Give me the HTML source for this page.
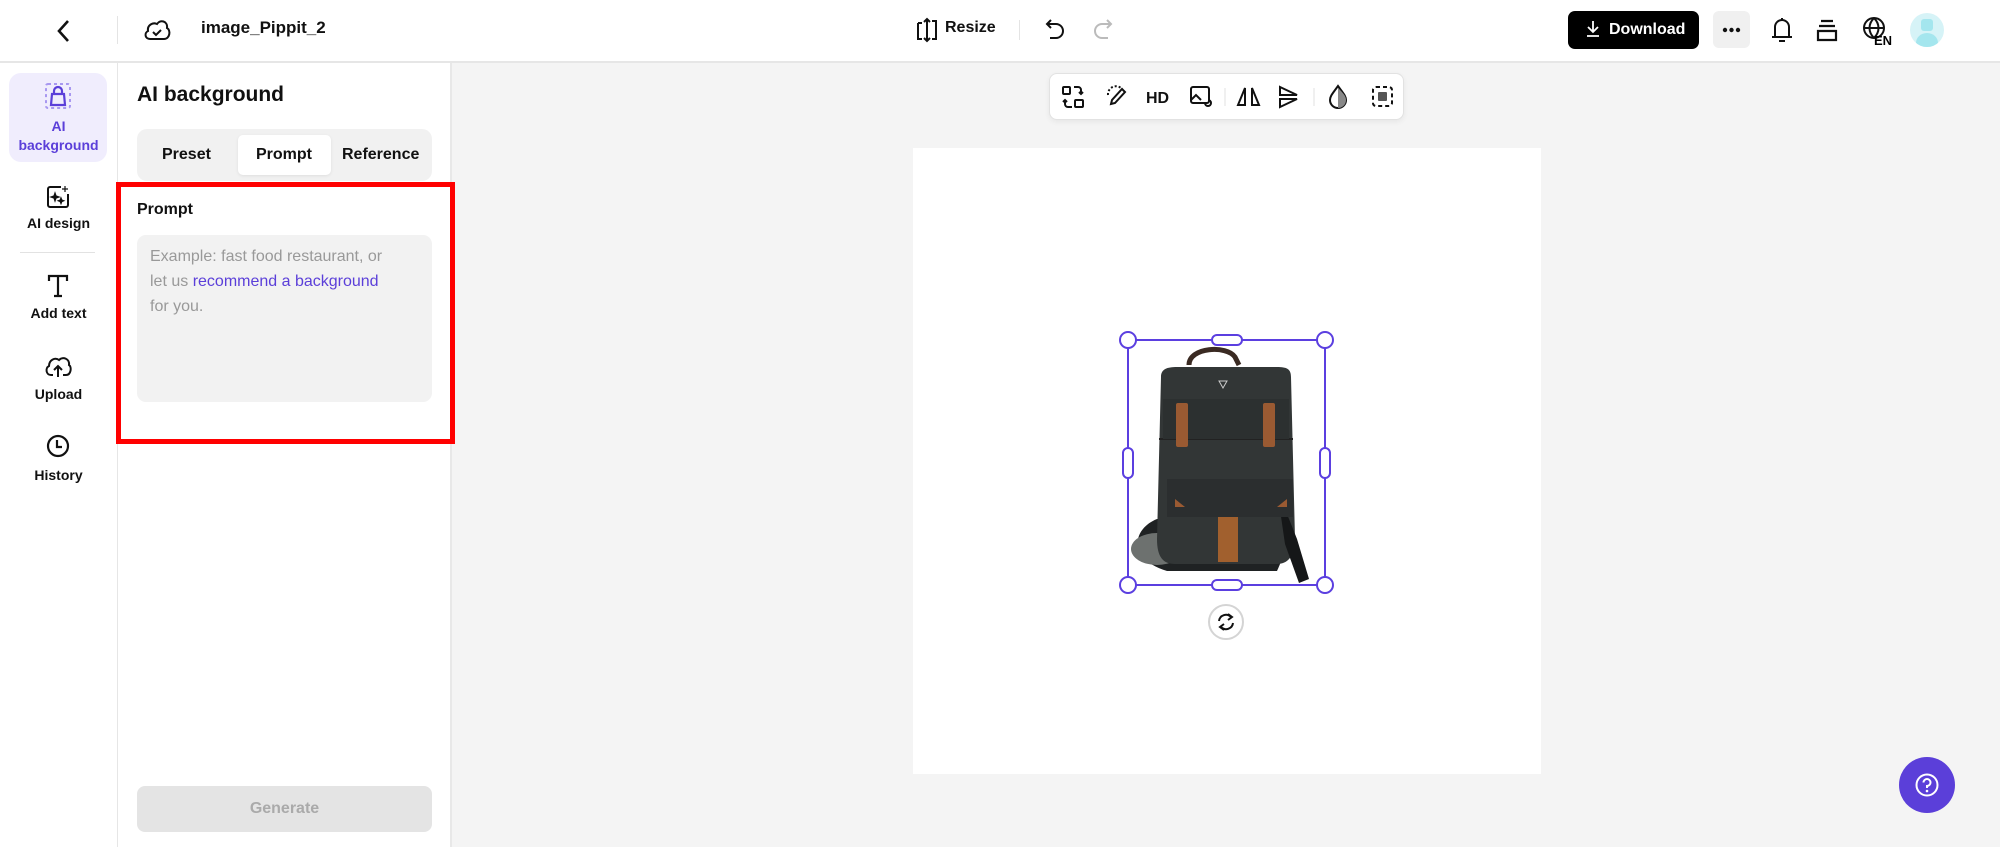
<!DOCTYPE html>
<html><head><meta charset="utf-8"><style>
*{box-sizing:border-box;margin:0;padding:0}
body{width:2000px;height:847px;overflow:hidden;background:#f4f4f4;font-family:"Liberation Sans",Arial,sans-serif;color:#111;position:relative}
.a{position:absolute}
.top{left:0;top:0;width:2000px;height:63px;background:#fff;border-bottom:2px solid #e6e6e6}
.rail{left:0;top:63px;width:117px;height:784px;background:#fff}
.panel{left:117px;top:63px;width:335px;height:784px;background:#fff;border-left:1px solid #e6e6e6;border-right:2px solid #e8e8e8}
.lab{width:117px;text-align:center;font-size:14px;font-weight:bold;left:0}
svg{overflow:visible}
</style></head><body>
<div class="a top"></div>
<svg class="a" style="left:56px;top:18px" width="16" height="26" viewBox="0 0 16 26"><path d="M12 3 L3 13 L12 23" fill="none" stroke="#111" stroke-width="2.6"/></svg>
<div class="a" style="left:117px;top:16px;width:1px;height:28px;background:#e4e4e4"></div>
<svg class="a" style="left:143px;top:17px" width="28" height="26" viewBox="0 0 28 26"><path d="M7 22 C2 22 1 16 5 14 C4 8 10 5 14 7 C17 2 25 4 24 11 C28 13 27 22 21 22 Z" fill="none" stroke="#111" stroke-width="2"/><path d="M10 15 L13 18 L18 13" fill="none" stroke="#111" stroke-width="2"/></svg>
<div class="a" style="left:201px;top:18px;font-size:17px;font-weight:bold;width:124px;overflow:hidden;white-space:nowrap">image_Pippit_2025</div>
<svg class="a" style="left:916px;top:17px" width="22" height="26" viewBox="0 0 22 26"><path d="M2 6 V22 H6 M2 6 H6 M16 4 H20 V22 H16" fill="none" stroke="#111" stroke-width="2"/><path d="M11 2 V24 M8 5 L11 2 L14 5 M8 21 L11 24 L14 21" fill="none" stroke="#111" stroke-width="2"/></svg>
<div class="a" style="left:945px;top:19px;font-size:16px;font-weight:bold">Resize</div>
<div class="a" style="left:1019px;top:20px;width:1px;height:20px;background:#e4e4e4"></div>
<svg class="a" style="left:1045px;top:18px" width="20" height="24" viewBox="0 0 20 24"><path d="M6 2 L2 6 L6 10 M2 6 H11 A6 6 0 0 1 11 20 H5" fill="none" stroke="#111" stroke-width="2"/></svg>
<svg class="a" style="left:1093px;top:18px" width="20" height="24" viewBox="0 0 20 24"><path d="M14 2 L18 6 L14 10 M18 6 H9 A6 6 0 0 0 9 20 H15" fill="none" stroke="#bbb" stroke-width="2"/></svg>
<div class="a" style="left:1568px;top:11px;width:131px;height:38px;background:#000;border-radius:7px;color:#fff;font-size:16px;font-weight:bold;line-height:38px;padding-left:41px">Download</div>
<svg class="a" style="left:1586px;top:20px" width="14" height="18" viewBox="0 0 14 18"><path d="M7 1 V12 M2 7 L7 12 L12 7 M1 16 H13" fill="none" stroke="#fff" stroke-width="1.8"/></svg>
<div class="a" style="left:1713px;top:11px;width:37px;height:37px;background:#f0f0f0;border-radius:6px"></div>
<svg class="a" style="left:1713px;top:11px" width="37" height="37" viewBox="0 0 37 37"><circle cx="12" cy="19" r="2.2" fill="#111"/><circle cx="18.5" cy="19" r="2.2" fill="#111"/><circle cx="25" cy="19" r="2.2" fill="#111"/></svg>
<svg class="a" style="left:1770px;top:15px" width="24" height="30" viewBox="0 0 24 30"><path d="M5 22 V12 A7 7 0 0 1 19 12 V22 H2 H22 M12 3 V5 M9 26 H15" fill="none" stroke="#111" stroke-width="2"/></svg>
<svg class="a" style="left:1815px;top:18px" width="24" height="26" viewBox="0 0 24 26"><path d="M6 3 H18 M4 8 H20 M3 13 H21 V22 H3 Z" fill="none" stroke="#111" stroke-width="2.2"/></svg>
<svg class="a" style="left:1862px;top:15px" width="36" height="32" viewBox="0 0 36 32"><circle cx="12" cy="13" r="10" fill="none" stroke="#111" stroke-width="2"/><path d="M2 13 H22 M12 3 C6 9 6 17 12 23 M12 3 C18 9 18 17 12 23" fill="none" stroke="#111" stroke-width="2"/><text x="12" y="30" font-size="13" font-weight="bold" font-family="Liberation Sans">EN</text></svg>
<div class="a" style="left:1910px;top:13px;width:34px;height:34px;border-radius:50%;background:#d6f3f7;overflow:hidden"><div class="a" style="left:6px;top:20px;width:22px;height:20px;border-radius:50%;background:#a4e6ee"></div><div class="a" style="left:11px;top:6px;width:12px;height:12px;border-radius:3px;background:#a4e6ee"></div></div>

<div class="a rail"></div>
<div class="a" style="left:9px;top:73px;width:98px;height:89px;background:#f0edfd;border-radius:12px"></div>
<svg class="a" style="left:45px;top:83px" width="26" height="26" viewBox="0 0 26 26"><rect x="1" y="1" width="24" height="24" rx="2" fill="none" stroke="#a898f0" stroke-width="2" stroke-dasharray="3 3"/><path d="M6 22 L7 11 H19 L20 22 Z M9 11 V8 A4 4 0 0 1 17 8 V11" fill="none" stroke="#5b3fd9" stroke-width="2.2"/></svg>
<div class="a lab" style="top:117px;color:#5b3fd9;line-height:19px;left:0">AI<br>background</div>
<svg class="a" style="left:46px;top:185px" width="24" height="24" viewBox="0 0 24 24"><path d="M15 2 H4 A2 2 0 0 0 2 4 V20 A2 2 0 0 0 4 22 H20 A2 2 0 0 0 22 20 V9" fill="none" stroke="#111" stroke-width="2"/><path d="M9 8 L10 11 L13 12 L10 13 L9 16 L8 13 L5 12 L8 11 Z M15 13 l.8 2 2 .8 -2 .8 -.8 2 -.8-2 -2-.8 2-.8Z M19 1 V7 M16 4 H22" fill="#111" stroke="#111" stroke-width="1.2"/></svg>
<div class="a lab" style="top:215px">AI design</div>
<div class="a" style="left:20px;top:252px;width:75px;height:1px;background:#e2e2e2"></div>
<svg class="a" style="left:47px;top:274px" width="22" height="24" viewBox="0 0 22 24"><path d="M2 7 V2 H20 V7 M11 2 V22 M7 22 H15" fill="none" stroke="#111" stroke-width="2.2"/></svg>
<div class="a lab" style="top:305px">Add text</div>
<svg class="a" style="left:44px;top:355px" width="28" height="24" viewBox="0 0 28 24"><path d="M9 20 H7 C2 20 1 13 5 11 C5 5 11 2 15 5 C19 1 26 4 25 10 C28 12 27 20 22 20 H19" fill="none" stroke="#111" stroke-width="2"/><path d="M14 22 V11 M10 15 L14 11 L18 15" fill="none" stroke="#111" stroke-width="2"/></svg>
<div class="a lab" style="top:386px">Upload</div>
<svg class="a" style="left:46px;top:434px" width="24" height="24" viewBox="0 0 24 24"><circle cx="12" cy="12" r="10" fill="none" stroke="#111" stroke-width="2.2"/><path d="M11 6 V13 H16" fill="none" stroke="#111" stroke-width="2.2"/></svg>
<div class="a lab" style="top:467px">History</div>

<div class="a panel"></div>
<div class="a" style="left:137px;top:83px;font-size:21px;font-weight:bold">AI background</div>
<div class="a" style="left:137px;top:129px;width:295px;height:52px;background:#f1f1f1;border-radius:10px"></div>
<div class="a" style="left:238px;top:135px;width:93px;height:40px;background:#fff;border-radius:5px;box-shadow:0 1px 3px rgba(0,0,0,.08)"></div>
<div class="a" style="left:162px;top:146px;font-size:16px;font-weight:bold">Preset</div>
<div class="a" style="left:256px;top:146px;font-size:16px;font-weight:bold">Prompt</div>
<div class="a" style="left:342px;top:146px;font-size:16px;font-weight:bold">Reference</div>
<div class="a" style="left:116px;top:182px;width:339px;height:262px;border:5px solid #ff0000"></div>
<div class="a" style="left:137px;top:201px;font-size:16px;font-weight:bold">Prompt</div>
<div class="a" style="left:137px;top:235px;width:295px;height:167px;background:#f2f2f2;border-radius:9px"></div>
<div class="a" style="left:150px;top:244px;width:280px;font-size:16px;line-height:25px;color:#999;white-space:nowrap">Example: fast food restaurant, or<br>let us <span style="color:#5b3fd9">recommend a background</span><br>for you.</div>
<div class="a" style="left:137px;top:786px;width:295px;height:46px;background:#e4e4e4;border-radius:8px;text-align:center;line-height:46px;font-size:16px;font-weight:bold;color:#aaa">Generate</div>

<div class="a" style="left:1049px;top:73px;width:355px;height:47px;background:#fff;border:1px solid #e2e2e2;border-radius:8px;box-shadow:0 2px 6px rgba(0,0,0,.06)"></div>
<svg class="a" style="left:1049px;top:73px" width="355" height="47" viewBox="1049 73 355 47">
<g fill="none" stroke="#111" stroke-width="2">
<rect x="1063" y="87" width="7" height="7" rx="1"/><rect x="1075" y="100" width="8" height="7" rx="1"/><path d="M1074 87 h4 a3 3 0 0 1 3 3 v4 M1079 92 l2 2 2-2 M1072 107 h-4 a3 3 0 0 1 -3-3 v-4 M1063 102 l2-2 2 2"/>
<path d="M1108 95 a8 8 0 0 1 14-6" stroke-dasharray="2 2"/><path d="M1122 89 l3 3 -10 11 -4 1 1-4 z"/>
<rect x="1191" y="87" width="18" height="16" rx="2"/><path d="M1191 100 l5-5 5 5 M1205 103 a3 3 0 1 0 3 -3"/>
<path d="M1245 88 v17 h-7 z M1252 88 v17 h7 z"/>
<path d="M1280 87 l17 8 -17 0 z M1280 107 l17-8 -17 0 z"/>
<path d="M1338 86 c-5 7 -8 10 -8 14 a8 8 0 0 0 16 0 c0-4 -3-7 -8-14z"/>
<rect x="1373" y="87" width="19" height="19" rx="3" stroke-dasharray="4 3"/>
</g>
<text x="1146" y="103" font-size="16" font-weight="bold" font-family="Liberation Sans" fill="#111">HD</text>
<path d="M1338 88 v20 a8 8 0 0 0 0 0 c4 0 8-3 8-8 c0-4-3-7-8-12z" fill="#888"/>
<rect x="1378" y="92" width="9" height="9" rx="1" fill="#555"/>
<path d="M1225 88 v18 M1314 88 v18" stroke="#e2e2e2" stroke-width="1"/>
</svg>

<div class="a" style="left:913px;top:148px;width:628px;height:626px;background:#fff"></div>
<svg class="a" style="left:1127px;top:339px" width="200" height="250" viewBox="0 0 200 250">
<path d="M62 26 C62 8 100 6 108 18 L112 26" fill="none" stroke="#3a2a22" stroke-width="5"/>
<path d="M30 180 C5 190 0 220 40 232 L150 232 C160 210 165 190 160 180 Z" fill="#1f2223"/>
<ellipse cx="30" cy="210" rx="26" ry="16" fill="#6d716f"/>
<path d="M34 38 C34 30 40 28 50 28 L150 28 C160 28 164 30 164 38 L168 200 C168 218 160 225 150 225 L48 225 C36 225 30 218 30 200 Z" fill="#323636"/>
<path d="M150 150 L170 200 L182 240 L172 244 L158 205 Z" fill="#151718"/>
<path d="M32 100 H166" stroke="#222" stroke-width="2"/>
<path d="M36 60 H162 V100 H36Z" fill="#2c3030"/>
<rect x="49" y="64" width="12" height="44" rx="2" fill="#9a5a32"/>
<rect x="136" y="64" width="12" height="44" rx="2" fill="#9a5a32"/>
<path d="M40 140 H166 V178 H40Z" fill="#2b2e2f"/>
<rect x="91" y="178" width="20" height="45" fill="#a1602e"/>
<path d="M48 160 l10 8 -10 0z M160 160 l-10 8 10 0z" fill="#9a5a32"/>
<path d="M92 42 l8 0 -4 7z" fill="none" stroke="#ccc" stroke-width="1"/>
</svg>
<svg class="a" style="left:1110px;top:322px" width="234" height="280" viewBox="1110 322 234 280">
<rect x="1128" y="340" width="197" height="245" fill="none" stroke="#5b3fe0" stroke-width="2"/>
<g fill="#fff" stroke="#5b3fe0" stroke-width="2">
<circle cx="1128" cy="340" r="8"/><circle cx="1325" cy="340" r="8"/><circle cx="1128" cy="585" r="8"/><circle cx="1325" cy="585" r="8"/>
<rect x="1212" y="335" width="30" height="10" rx="5"/><rect x="1212" y="580" width="30" height="10" rx="5"/>
<rect x="1123" y="448" width="10" height="30" rx="5"/><rect x="1320" y="448" width="10" height="30" rx="5"/>
</g></svg>
<div class="a" style="left:1208px;top:604px;width:36px;height:36px;border-radius:50%;background:#fff;border:2px solid #d4d4d4"></div>
<svg class="a" style="left:1216px;top:612px" width="20" height="20" viewBox="0 0 20 20"><path d="M3 9 A7 7 0 0 1 15 5 M17 11 A7 7 0 0 1 5 15" fill="none" stroke="#111" stroke-width="2"/><path d="M12 2 L16 5 L12 8 M8 18 L4 15 L8 12" fill="none" stroke="#111" stroke-width="2"/></svg>
<div class="a" style="left:1899px;top:757px;width:56px;height:56px;border-radius:50%;background:#5b3fd9"></div>
<svg class="a" style="left:1914px;top:772px" width="26" height="26" viewBox="0 0 26 26"><circle cx="13" cy="13" r="10.5" fill="none" stroke="#fff" stroke-width="2"/><path d="M9.5 10.5 A3.5 3.5 0 1 1 13 14 V16" fill="none" stroke="#fff" stroke-width="2"/><circle cx="13" cy="19" r="1.3" fill="#fff"/></svg>
</body></html>
